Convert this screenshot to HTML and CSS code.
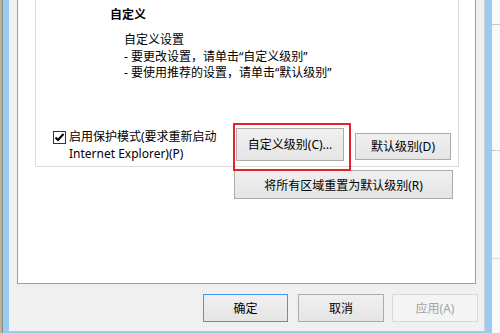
FILE: index.html
```html
<!DOCTYPE html>
<html lang="zh-CN">
<head>
<meta charset="utf-8">
<link rel="stylesheet" href="styles.css">
</head>
<body>
<div class="screen">
  <div class="bg-left"></div>
  <div class="window">
    <div class="panel">
      <div class="group">
        <div class="desc">
          <div class="title">自定义</div>
          <div class="lines">自定义设置<br>- 要更改设置，请单击“自定义级别”<br>- 要使用推荐的设置，请单击“默认级别”</div>
        </div>
        <div class="opts">
          <div class="check">
            <span class="box"><svg width="11" height="11" viewBox="0 0 11 11"><path d="M1.5 5.5 L4 8 L9.5 2" fill="none" stroke="#000" stroke-width="2"/></svg></span>
            <span class="check-text">启用保护模式(要求重新启动<br>Internet Explorer)(P)</span>
          </div>
          <div class="btn custom">自定义级别(C)...<span class="highlight"></span></div>
          <div class="btn default">默认级别(D)</div>
        </div>
      </div>
      <div class="reset-row"><div class="btn reset">将所有区域重置为默认级别(R)</div></div>
    </div>
    <div class="footer">
      <div class="btn ok">确定</div>
      <div class="btn cancel">取消</div>
      <div class="btn apply">应用(A)</div>
    </div>
  </div>
  <div class="bg-right">
    <div class="r-line"></div>
    <div class="r-dots"></div>
    <div class="r-line2"></div>
  </div>
</div>
</body>
</html>
```
FILE: styles.css
```css
html, body {
  margin: 0;
  padding: 0;
}
body {
  width: 500px;
  height: 333px;
  overflow: hidden;
  font-family: "Noto Sans", "Noto Sans CJK SC", sans-serif;
  font-size: 12px;
  color: #000;
}
.screen {
  display: flex;
  width: 500px;
  height: 333px;
}
.bg-left {
  width: 2px;
  border-right: 1px solid #8a8a8a;
  background: #bfb394;
}
.window {
  width: 476px;
  height: 331px;
  background: #f0f0f0;
  border-left: 6px solid #9ccbf2;
  border-right: 7px solid #9ccbf2;
  border-bottom: 2px solid #9ccbf2;
  box-shadow: inset -1px 0 0 #cfcfcf;
  display: flex;
  flex-direction: column;
  position: relative;
}
.window::after {
  content: "";
  position: absolute;
  right: -8px;
  top: 0;
  bottom: -2px;
  width: 1px;
  background: #7fa9cf;
}
.panel {
  margin-left: 8px;
  width: 457px;
  height: 283px;
  background: #fff;
  border: 1px solid #a0a0a0;
  border-top: none;
}
.group {
  margin-left: 17px;
  width: 424px;
  height: 167px;
  box-sizing: border-box;
  border: 1px solid #dcdcdc;
  border-top: none;
  display: flex;
  flex-direction: column;
}
.desc {
  padding-left: 74px;
  padding-top: 7px;
}
.title {
  font-weight: bold;
  line-height: 16px;
}
.lines {
  margin-top: 9px;
  padding-left: 14px;
  line-height: 16.5px;
}
.opts {
  margin-top: 46px;
  padding-left: 17px;
  display: flex;
  align-items: flex-start;
}
.check {
  width: 183px;
  display: flex;
  align-items: flex-start;
}
.box {
  width: 11px;
  height: 11px;
  margin-top: 3px;
  border: 1px solid #333;
  background: #fff;
  display: flex;
}
.check-text {
  margin-left: 3px;
  line-height: 17px;
  white-space: nowrap;
}
.btn {
  box-sizing: border-box;
  border: 1px solid #acacac;
  background: linear-gradient(#f0f0f0, #e5e5e5);
  display: flex;
  align-items: center;
  justify-content: center;
  white-space: nowrap;
}
.custom {
  position: relative;
  width: 108px;
  height: 33px;
}
.highlight {
  position: absolute;
  left: -4px;
  top: -6px;
  width: 114px;
  height: 44px;
  border: 2px solid #e8202a;
}
.default {
  margin-left: 11px;
  margin-top: 5px;
  width: 96px;
  height: 27px;
}
.reset-row {
  display: flex;
  justify-content: flex-end;
  padding-right: 22px;
  margin-top: 3px;
}
.reset {
  width: 219px;
  height: 29px;
}
.footer {
  display: flex;
  justify-content: flex-end;
  padding-top: 10px;
  padding-right: 7px;
}
.footer .btn {
  height: 28px;
}
.ok {
  width: 85px;
  border-color: #3c99f0;
}
.cancel {
  width: 86px;
  margin-left: 10px;
}
.apply {
  width: 86px;
  margin-left: 8px;
  border-color: #d9d9d9;
  background: #f4f4f4;
  color: #a3a3a3;
}
.bg-right {
  flex: 1;
  background: #fafafa;
  position: relative;
}
.r-line {
  position: absolute;
  left: 0;
  right: 0;
  top: 24px;
  border-top: 1px solid #c8c8c8;
}
.r-dots {
  position: absolute;
  left: 0;
  right: 0;
  top: 150px;
  border-top: 1px dotted #b0b0b0;
}
.r-line2 {
  position: absolute;
  left: 0;
  right: 0;
  top: 258px;
  border-top: 1px solid #d8d8d8;
}
```
